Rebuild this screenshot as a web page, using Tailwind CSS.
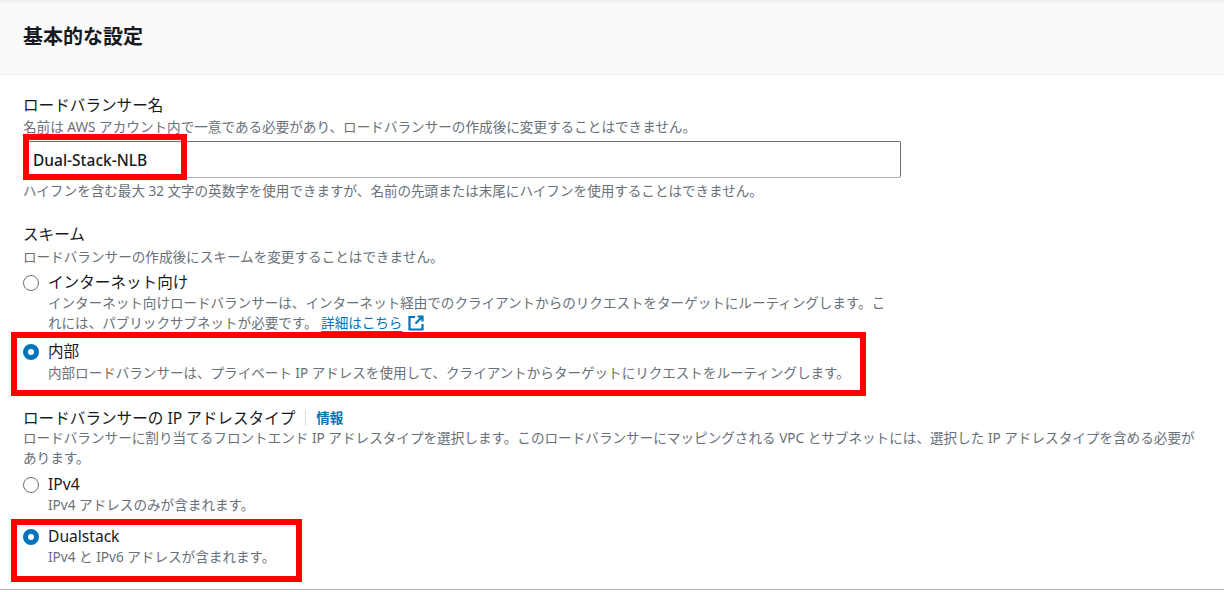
<!DOCTYPE html>
<html lang="ja">
<head>
<meta charset="utf-8">
<script src="https://cdn.jsdelivr.net/npm/@tailwindcss/browser@4"></script>
</head>
<body class="bg-white overflow-hidden">
<div class="relative w-[1224px] h-[592px] overflow-hidden bg-white text-[#16191f] font-['Noto_Sans','Noto_Sans_CJK_JP',sans-serif]">
  <div class="h-[3px] bg-[#f2f3f3]"></div>
  <header class="h-[72px] bg-[#fafafa] border-b border-[#eaeded] px-[23px] flex items-center">
    <h2 class="text-[20px] font-bold leading-[24px] -mt-[4px]">基本的な設定</h2>
  </header>

  <main class="pl-[23px] pt-[20px] pr-[24px]">
    <section class="w-[878px]">
      <div class="text-[15.6px] leading-[20px]">ロードバランサー名</div>
      <p class="text-[13.6px] leading-[16px] mt-[4px] text-[#687078] whitespace-nowrap">名前は AWS アカウント内で一意である必要があり、ロードバランサーの作成後に変更することはできません。</p>
      <input value="Dual-Stack-NLB" class="block w-[878px] h-[37px] mt-[6px] px-[9px] text-[15.5px] font-medium text-[#16191f] bg-white border border-[#687078] border-b-[#aab7b8] rounded-[2px]">
      <p class="text-[13.55px] leading-[16px] mt-[5px] text-[#687078] whitespace-nowrap">ハイフンを含む最大 32 文字の英数字を使用できますが、名前の先頭または末尾にハイフンを使用することはできません。</p>
    </section>

    <section class="mt-[25px] w-[878px]">
      <div class="text-[15.6px] leading-[20px]">スキーム</div>
      <p class="text-[13.6px] leading-[16px] mt-[5px] text-[#687078]">ロードバランサーの作成後にスキームを変更することはできません。</p>
      <div class="flex gap-[9px] mt-[7px]">
        <span class="mt-[3px] w-[16px] h-[16px] shrink-0 rounded-full border-[1.5px] border-[#687078] bg-white"></span>
        <div class="w-[853px]">
          <div class="text-[15.6px] leading-[20px]">インターネット向け</div>
          <p class="w-[845px] text-[13.55px] leading-[20px] mt-[1px] text-[#687078]">インターネット向けロードバランサーは、インターネット経由でのクライアントからのリクエストをターゲットにルーティングします。これには、パブリックサブネットが必要です。 <a class="text-[#0073bb] underline underline-offset-[3px]">詳細はこちら</a><svg class="inline-block ml-[6px] w-[16px] h-[16px] align-[-3px]" viewBox="0 0 16 16" fill="none" stroke="#0073bb" stroke-width="2.2"><path d="M7 2H1.500v12.500h13V9"/><path d="M9.500 1.500h5V6.500M14.500 1.500 7.500 8.500"/></svg></p>
        </div>
      </div>
      <div class="flex gap-[9px] mt-[8px]">
        <span class="mt-[3px] w-[16px] h-[16px] shrink-0 rounded-full border-[5px] border-[#0073bb] bg-white"></span>
        <div>
          <div class="text-[15.6px] leading-[20px]">内部</div>
          <p class="text-[13.55px] leading-[16px] mt-[4px] text-[#687078] whitespace-nowrap">内部ロードバランサーは、プライベート IP アドレスを使用して、クライアントからターゲットにリクエストをルーティングします。</p>
        </div>
      </div>
    </section>

    <section class="mt-[27px] w-[1177px]">
      <div class="flex items-center text-[15.6px] leading-[20px]">
        <span>ロードバランサーの IP アドレスタイプ</span>
        <span class="ml-[10px] w-px h-[16px] bg-[#d5dbdb]"></span>
        <a class="ml-[10px] text-[13.5px] font-semibold text-[#0073bb]">情報</a>
      </div>
      <p class="text-[13.6px] leading-[20px] mt-[0px] text-[#687078]">ロードバランサーに割り当てるフロントエンド IP アドレスタイプを選択します。このロードバランサーにマッピングされる VPC とサブネットには、選択した IP アドレスタイプを含める必要があります。</p>
      <div class="flex gap-[9px] mt-[6px]">
        <span class="mt-[3px] w-[16px] h-[16px] shrink-0 rounded-full border-[1.5px] border-[#687078] bg-white"></span>
        <div>
          <div class="text-[15.6px] leading-[20px]">IPv4</div>
          <p class="text-[13.6px] leading-[16px] mt-[3px] text-[#687078]">IPv4 アドレスのみが含まれます。</p>
        </div>
      </div>
      <div class="flex gap-[9px] mt-[13px]">
        <span class="mt-[3px] w-[16px] h-[16px] shrink-0 rounded-full border-[5px] border-[#0073bb] bg-white"></span>
        <div>
          <div class="text-[15.6px] leading-[20px]">Dualstack</div>
          <p class="text-[13.6px] leading-[16px] mt-[3px] text-[#687078]">IPv4 と IPv6 アドレスが含まれます。</p>
        </div>
      </div>
    </section>
  </main>

  <div class="absolute left-0 right-0 top-[589px] h-[1px] bg-[#aab7b8]"></div>
  <div class="absolute left-[23px] top-[134px] w-[164px] h-[46px] border-[6px] border-[#ff0000] pointer-events-none"></div>
  <div class="absolute left-[11px] top-[332px] w-[855px] h-[64px] border-[6px] border-[#ff0000] pointer-events-none"></div>
  <div class="absolute left-[11px] top-[519px] w-[291px] h-[63px] border-[6px] border-[#ff0000] pointer-events-none"></div>
</div>
</body>
</html>
